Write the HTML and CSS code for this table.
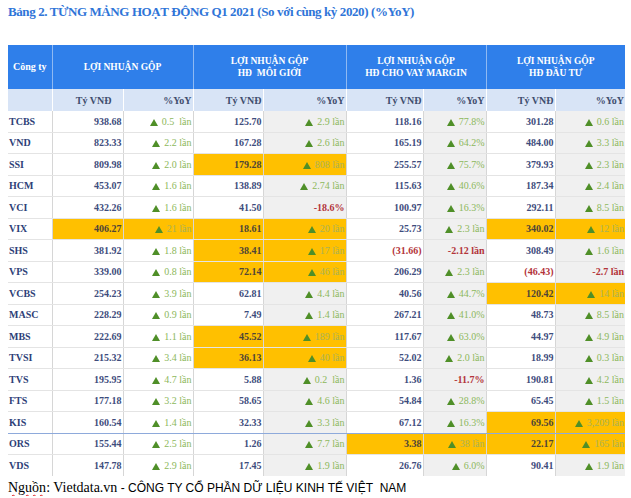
FILE: index.html
```html
<!DOCTYPE html>
<html lang="vi">
<head>
<meta charset="utf-8">
<title>Bảng 2</title>
<link rel="stylesheet" href="styles.css">
</head>
<body>
<div class="page">
  <h1 class="title">Bảng 2. TỪNG MẢNG HOẠT ĐỘNG Q1 2021 (So với cùng kỳ 2020) (%YoY)</h1>
  <table class="tbl">
    <colgroup>
      <col class="c-co"><col class="c1"><col class="c2"><col class="c3"><col class="c4"><col class="c5"><col class="c6"><col class="c7"><col class="c8">
    </colgroup>
    <thead>
      <tr class="hd">
        <th class="co">Công ty</th>
        <th colspan="2">LỢI NHUẬN GỘP</th>
        <th colspan="2">LỢI NHUẬN GỘP<br>HĐ&nbsp; MÔI GIỚI</th>
        <th colspan="2">LỢI NHUẬN GỘP<br>HĐ CHO VAY MARGIN</th>
        <th colspan="2">LỢI NHUẬN GỘP<br>HĐ ĐẦU TƯ</th>
      </tr>
      <tr class="sub">
        <th></th>
        <th class="pad">Tỷ VNĐ</th><th>%YoY</th>
        <th>Tỷ VNĐ</th><th>%YoY</th>
        <th>Tỷ VNĐ</th><th>%YoY</th>
        <th>Tỷ VNĐ</th><th>%YoY</th>
      </tr>
    </thead>
    <tbody>
      <tr><td class="co">TCBS</td><td class="n">938.68</td><td class="y"><i class="up"></i>0.5&nbsp; lần</td><td class="n">125.70</td><td class="y"><i class="up"></i>2.9 lần</td><td class="n">118.16</td><td class="y"><i class="up"></i>77.8%</td><td class="n">301.28</td><td class="y"><i class="up"></i>0.6 lần</td></tr>
      <tr><td class="co">VND</td><td class="n">823.33</td><td class="y"><i class="up"></i>2.2 lần</td><td class="n">167.28</td><td class="y"><i class="up"></i>2.6 lần</td><td class="n">165.19</td><td class="y"><i class="up"></i>64.2%</td><td class="n">484.00</td><td class="y"><i class="up"></i>3.3 lần</td></tr>
      <tr><td class="co">SSI</td><td class="n">809.98</td><td class="y"><i class="up"></i>2.0 lần</td><td class="n o">179.28</td><td class="y o"><i class="up"></i>808 lần</td><td class="n">255.57</td><td class="y"><i class="up"></i>75.7%</td><td class="n">379.93</td><td class="y"><i class="up"></i>2.3 lần</td></tr>
      <tr><td class="co">HCM</td><td class="n">453.07</td><td class="y"><i class="up"></i>1.6 lần</td><td class="n">138.89</td><td class="y"><i class="up"></i>2.74 lần</td><td class="n">115.63</td><td class="y"><i class="up"></i>40.6%</td><td class="n">187.34</td><td class="y"><i class="up"></i>2.4 lần</td></tr>
      <tr><td class="co">VCI</td><td class="n">432.26</td><td class="y"><i class="up"></i>1.6 lần</td><td class="n">41.50</td><td class="y r">-18.6%</td><td class="n">100.97</td><td class="y"><i class="up"></i>16.3%</td><td class="n">292.11</td><td class="y"><i class="up"></i>8.5 lần</td></tr>
      <tr><td class="co">VIX</td><td class="n o">406.27</td><td class="y o"><i class="up"></i>21 lần</td><td class="n o">18.61</td><td class="y o"><i class="up"></i>20 lần</td><td class="n">25.73</td><td class="y"><i class="up"></i>2.3 lần</td><td class="n o">340.02</td><td class="y o"><i class="up"></i>12 lần</td></tr>
      <tr><td class="co">SHS</td><td class="n">381.92</td><td class="y"><i class="up"></i>1.8 lần</td><td class="n o">38.41</td><td class="y o"><i class="up"></i>17 lần</td><td class="n r">(31.66)</td><td class="y r">-2.12 lần</td><td class="n">308.49</td><td class="y"><i class="up"></i>1.6 lần</td></tr>
      <tr><td class="co">VPS</td><td class="n">339.00</td><td class="y"><i class="up"></i>0.8 lần</td><td class="n o">72.14</td><td class="y o"><i class="up"></i>46 lần</td><td class="n">206.29</td><td class="y"><i class="up"></i>2.3 lần</td><td class="n r">(46.43)</td><td class="y r">-2.7 lần</td></tr>
      <tr><td class="co">VCBS</td><td class="n">254.23</td><td class="y"><i class="up"></i>3.9 lần</td><td class="n">62.81</td><td class="y"><i class="up"></i>4.4 lần</td><td class="n">40.56</td><td class="y"><i class="up"></i>44.7%</td><td class="n o">120.42</td><td class="y o"><i class="up"></i>14 lần</td></tr>
      <tr><td class="co">MASC</td><td class="n">228.29</td><td class="y"><i class="up"></i>0.9 lần</td><td class="n">7.49</td><td class="y"><i class="up"></i>1.4 lần</td><td class="n">267.21</td><td class="y"><i class="up"></i>41.0%</td><td class="n">48.73</td><td class="y"><i class="up"></i>8.5 lần</td></tr>
      <tr><td class="co">MBS</td><td class="n">222.69</td><td class="y"><i class="up"></i>1.1 lần</td><td class="n o">45.52</td><td class="y o"><i class="up"></i>189 lần</td><td class="n">117.67</td><td class="y"><i class="up"></i>63.0%</td><td class="n">44.97</td><td class="y"><i class="up"></i>4.9 lần</td></tr>
      <tr><td class="co">TVSI</td><td class="n">215.32</td><td class="y"><i class="up"></i>3.4 lần</td><td class="n o">36.13</td><td class="y o"><i class="up"></i>40 lần</td><td class="n">52.02</td><td class="y"><i class="up"></i>2.0 lần</td><td class="n">18.99</td><td class="y"><i class="up"></i>0.3 lần</td></tr>
      <tr><td class="co">TVS</td><td class="n">195.95</td><td class="y"><i class="up"></i>4.7 lần</td><td class="n">5.88</td><td class="y"><i class="up"></i>0.2&nbsp; lần</td><td class="n">1.36</td><td class="y r">-11.7%</td><td class="n">190.81</td><td class="y"><i class="up"></i>4.2 lần</td></tr>
      <tr><td class="co">FTS</td><td class="n">177.18</td><td class="y"><i class="up"></i>3.2 lần</td><td class="n">58.65</td><td class="y"><i class="up"></i>4.6 lần</td><td class="n">54.84</td><td class="y"><i class="up"></i>28.8%</td><td class="n">65.45</td><td class="y"><i class="up"></i>1.5 lần</td></tr>
      <tr class="kis"><td class="co">KIS</td><td class="n">160.54</td><td class="y"><i class="up"></i>1.4 lần</td><td class="n">32.33</td><td class="y"><i class="up"></i>3.3 lần</td><td class="n">67.12</td><td class="y"><i class="up"></i>16.3%</td><td class="n o">69.56</td><td class="y o"><i class="up"></i>3,209 lần</td></tr>
      <tr><td class="co">ORS</td><td class="n">155.44</td><td class="y"><i class="up"></i>2.5 lần</td><td class="n">1.26</td><td class="y"><i class="up"></i>7.7 lần</td><td class="n o">3.38</td><td class="y o"><i class="up"></i>38 lần</td><td class="n o">22.17</td><td class="y o"><i class="up"></i>165 lần</td></tr>
      <tr class="last"><td class="co">VDS</td><td class="n">147.78</td><td class="y"><i class="up"></i>2.9 lần</td><td class="n">17.45</td><td class="y"><i class="up"></i>1.9 lần</td><td class="n">26.76</td><td class="y"><i class="up"></i>6.0%</td><td class="n">90.41</td><td class="y"><i class="up"></i>1.9 lần</td></tr>
    </tbody>
  </table>
  <p class="src"><span class="src-a"><span class="spell">Nguồn</span>: Vietdata.vn</span><span class="src-b"> - CÔNG TY CỔ PHẦN DỮ LIỆU KINH TẾ VIỆT&nbsp; NAM</span></p>
</div>
</body>
</html>
```

FILE: styles.css
```css
html, body {
  margin: 0;
  padding: 0;
  background: #ffffff;
}

body {
  font-family: "Liberation Serif", "DejaVu Serif", serif;
}

.page {
  padding: 2px 0 0 8px;
  width: 617px;
}

.title {
  margin: 0;
  height: 43px;
  font-size: 13px;
  letter-spacing: -0.4px;
  line-height: 20px;
  font-weight: bold;
  color: #2f75d8;
  white-space: nowrap;
}

.tbl {
  border-collapse: collapse;
  table-layout: fixed;
  width: 617px;
}

.c-co { width: 44px; }
.c1 { width: 71px; }
.c2 { width: 70px; }
.c3 { width: 70px; }
.c4 { width: 83px; }
.c5 { width: 77px; }
.c6 { width: 63px; }
.c7 { width: 69px; }
.c8 { width: 70px; }

.hd th {
  height: 44px;
  padding: 0;
  background: #2f7fea;
  color: #ffffff;
  font-size: 9.5px;
  line-height: 12px;
  font-weight: bold;
  text-align: center;
  border-left: 1px solid #8fb9f2;
}

.hd th:first-child {
  border-left: none;
  font-size: 10px;
}

.sub th {
  height: 22px;
  padding: 0 1px 0 0;
  background: #d8e4f6;
  color: #3f4d6e;
  font-size: 10px;
  font-weight: bold;
  text-align: right;
  border-left: 1px solid #ffffff;
}

.sub th:first-child {
  border-left: none;
}

.sub th.pad {
  padding-right: 11px;
}

.tbl td {
  height: 20.5px;
  padding: 0 1px 0 0;
  font-size: 10px;
  text-align: right;
  white-space: nowrap;
  border-left: 1px solid #d6d6d6;
  border-bottom: 1px solid #e4e4e4;
}

.tbl td:nth-child(5),
.tbl td:nth-child(7),
.tbl td:nth-child(9) {
  background: #f0f0f0;
}

.tbl td.co {
  text-align: left;
  padding: 0 0 0 1px;
  border-left: none;
  font-weight: bold;
  color: #2e3f78;
}

.tbl td.n {
  font-weight: bold;
  color: #3e4c7c;
}

.tbl td.y {
  color: #8db85c;
}

.tbl td.r {
  color: #b3343a;
}

.tbl td.y.r {
  font-weight: bold;
}

.tbl td.o {
  background: #ffc000;
}

.tbl td.n.o {
  color: #4e4538;
}

.tbl td.y.o {
  color: #a9b258;
}

.kis td {
  border-bottom: 1px solid #8eaadb;
}

.last td {
  border-bottom: none;
}

.up {
  display: inline-block;
  width: 0;
  height: 0;
  border-left: 4px solid transparent;
  border-right: 4px solid transparent;
  border-bottom: 7px solid #4f8f28;
  margin-right: 4px;
  vertical-align: -1px;
}

.src {
  margin: 2px 0 0 0;
  white-space: nowrap;
  color: #000000;
}

.src-a {
  font-family: "Liberation Serif", serif;
  font-size: 14px;
}

.spell {
  text-decoration: underline wavy #e02020;
  text-decoration-thickness: 1px;
  text-underline-offset: 2px;
}

.src-b {
  font-family: "Liberation Sans", Arial, sans-serif;
  font-size: 12px;
}
```
